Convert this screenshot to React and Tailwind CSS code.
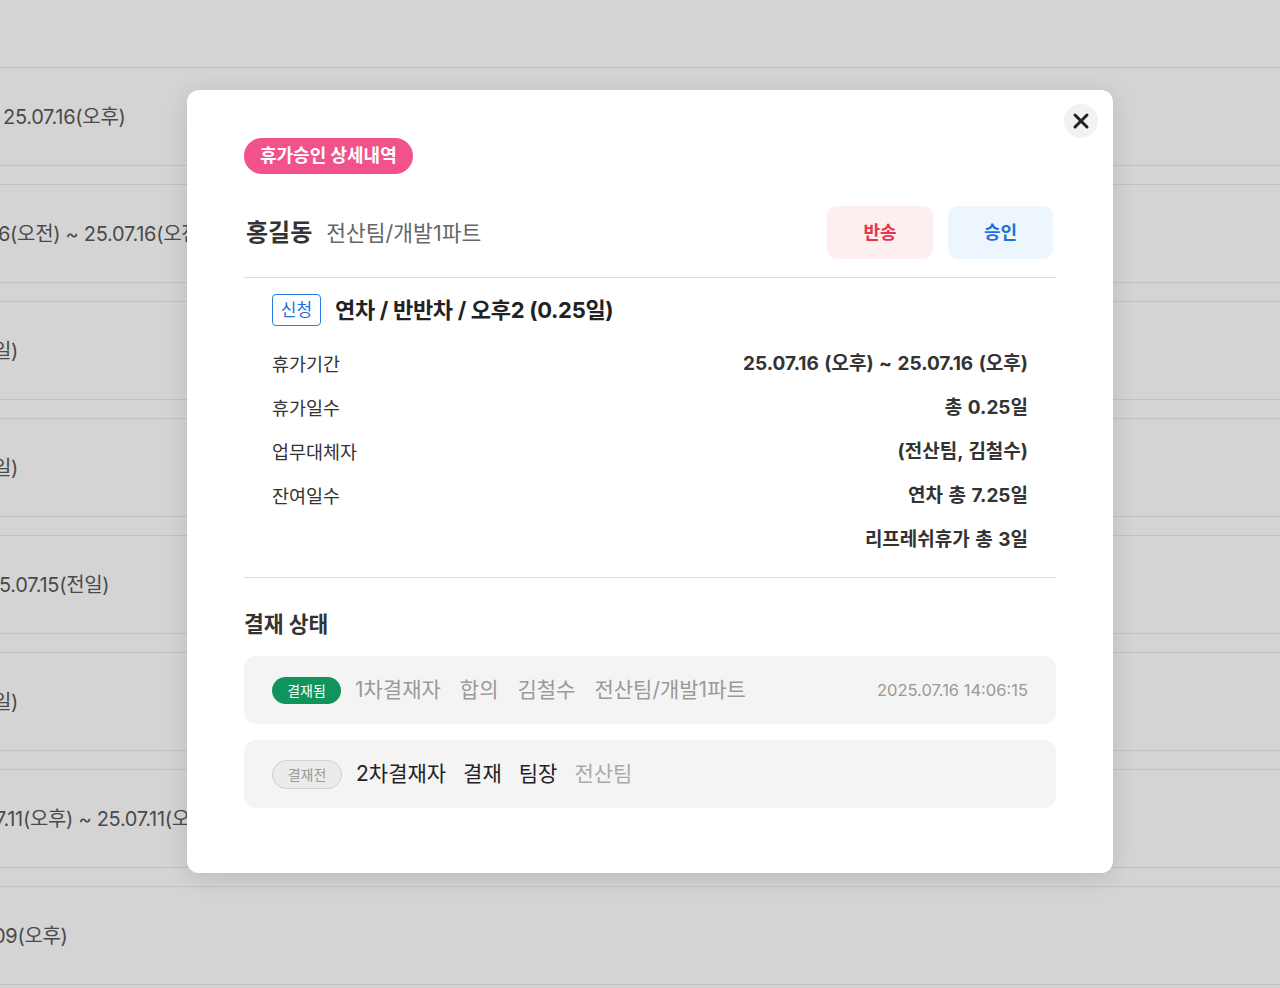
import React from 'react';

const bgRows = [
  { text: '25.07.16(오후)', shift: 'ml-[3px]' },
  { text: '6(오전) ~ 25.07.16(오전)', shift: 'ml-[-2px]' },
  { text: '일)', shift: 'ml-[-7px]' },
  { text: '일)', shift: 'ml-[-7px]' },
  { text: '5.07.15(전일)', shift: 'ml-[-1px]' },
  { text: '일)', shift: 'ml-[-7px]' },
  { text: '7.11(오후) ~ 25.07.11(오후)', shift: 'ml-[-5px]' },
  { text: '09(오후)', shift: 'ml-[-7px]' },
];

const details = [
  ['휴가기간', '25.07.16 (오후) ~ 25.07.16 (오후)'],
  ['휴가일수', '총 0.25일'],
  ['업무대체자', '(전산팀, 김철수)'],
  ['잔여일수', '연차 총 7.25일'],
  ['', '리프레쉬휴가 총 3일'],
];

function CloseIcon() {
  return (
    <svg width="18" height="18" viewBox="0 0 18 18" fill="none">
      <path d="M3 3L15 15M15 3L3 15" stroke="#222" strokeWidth="3" strokeLinecap="round" />
    </svg>
  );
}

export default function App() {
  return (
    <div className="relative w-[1280px] h-[988px] overflow-hidden bg-[#d4d4d4] font-['Inter','Noto_Sans_CJK_KR',sans-serif]">
      {/* background list under the dim */}
      <div className="flex flex-col gap-[18px] pt-[67px]">
        {bgRows.map((r, i) => (
          <div key={i} className="h-[99px] border-y border-[#c2c2c2] flex items-center overflow-hidden">
            <span className={`${r.shift} whitespace-nowrap text-[20px] leading-[28px] text-[#4a4a4a] tracking-[-0.3px]`}>{r.text}</span>
          </div>
        ))}
      </div>

      {/* modal */}
      <div className="absolute left-[187px] top-[90px] w-[926px] h-[783px] bg-white rounded-[12px] shadow-[0_4px_24px_rgba(0,0,0,0.12)] px-[57px] pt-[48px]">
        <button className="absolute top-[14px] right-[15px] w-[34px] h-[34px] rounded-full bg-[#f2f2f2] flex items-center justify-center">
          <CloseIcon />
        </button>

        <div className="flex">
          <span className="h-[36px] px-[16px] rounded-full bg-[#f2528c] text-white text-[18px] font-bold leading-[36px]">
            휴가승인 상세내역
          </span>
        </div>

        <div className="mt-[32px] flex items-center justify-between pb-[18px] border-b border-[#dcdcdc]">
          <div className="flex items-baseline gap-[14px] pl-[2px]">
            <span className="text-[24px] font-bold text-[#333] leading-[32px]">홍길동</span>
            <span className="text-[21.5px] text-[#666] leading-[32px]">전산팀/개발1파트</span>
          </div>
          <div className="flex gap-[15px] pr-[3px]">
            <button className="w-[106px] h-[53px] rounded-[10px] bg-[#fdeef0] text-[#e8334f] text-[18px] font-bold">반송</button>
            <button className="w-[105px] h-[53px] rounded-[10px] bg-[#edf5fd] text-[#1b72e0] text-[18px] font-bold">승인</button>
          </div>
        </div>

        <div className="px-[28px] pt-[16px] pb-[15px] border-b border-[#dcdcdc]">
          <div className="flex items-center gap-[14px]">
            <span className="w-[49px] h-[32px] rounded-[4px] border border-[#2a7be4] text-[#1b72e0] text-[17px] leading-[30px] text-center">신청</span>
            <span className="text-[22px] font-bold text-[#222] leading-[30px] tracking-[-0.3px]">연차 / 반반차 / 오후2 (0.25일)</span>
          </div>
          <div className="mt-[16px] flex flex-col">
            {details.map(([k, v], i) => (
              <div key={i} className="h-[44px] flex items-center justify-between text-[18.5px] leading-[26px] text-[#333]">
                <span>{k}</span>
                <span className="font-bold text-[19px] [word-spacing:1px]">{v}</span>
              </div>
            ))}
          </div>
        </div>

        <div className="mt-[31px] text-[21.5px] font-bold text-[#333] leading-[30px]">결재 상태</div>

        <div className="mt-[17px] flex flex-col gap-[16px]">
          <div className="h-[68px] rounded-[12px] bg-[#f4f4f4] px-[28px] flex items-center justify-between">
            <div className="flex items-center gap-[14px]">
              <span className="h-[27px] w-[69px] rounded-full bg-[#11945c] text-white text-[14px] leading-[27px] text-center">결재됨</span>
              <div className="flex items-center gap-[19px] text-[21px] text-[#9a9a9a] leading-[28px]">
                <span>1차결재자</span>
                <span>합의</span>
                <span>김철수</span>
                <span>전산팀/개발1파트</span>
              </div>
            </div>
            <span className="text-[16.5px] text-[#999]">2025.07.16 14:06:15</span>
          </div>
          <div className="h-[68px] rounded-[12px] bg-[#f4f4f4] px-[28px] flex items-center">
            <div className="flex items-center gap-[14px]">
              <span className="h-[29px] w-[70px] rounded-full bg-[#ebebeb] border border-[#cfcfcf] text-[#999] text-[14px] leading-[27px] text-center">결재전</span>
              <div className="flex items-center gap-[17px] text-[21px] text-[#222] leading-[28px]">
                <span>2차결재자</span>
                <span>결재</span>
                <span>팀장</span>
                <span className="text-[#aaa]">전산팀</span>
              </div>
            </div>
          </div>
        </div>
      </div>
    </div>
  );
}
